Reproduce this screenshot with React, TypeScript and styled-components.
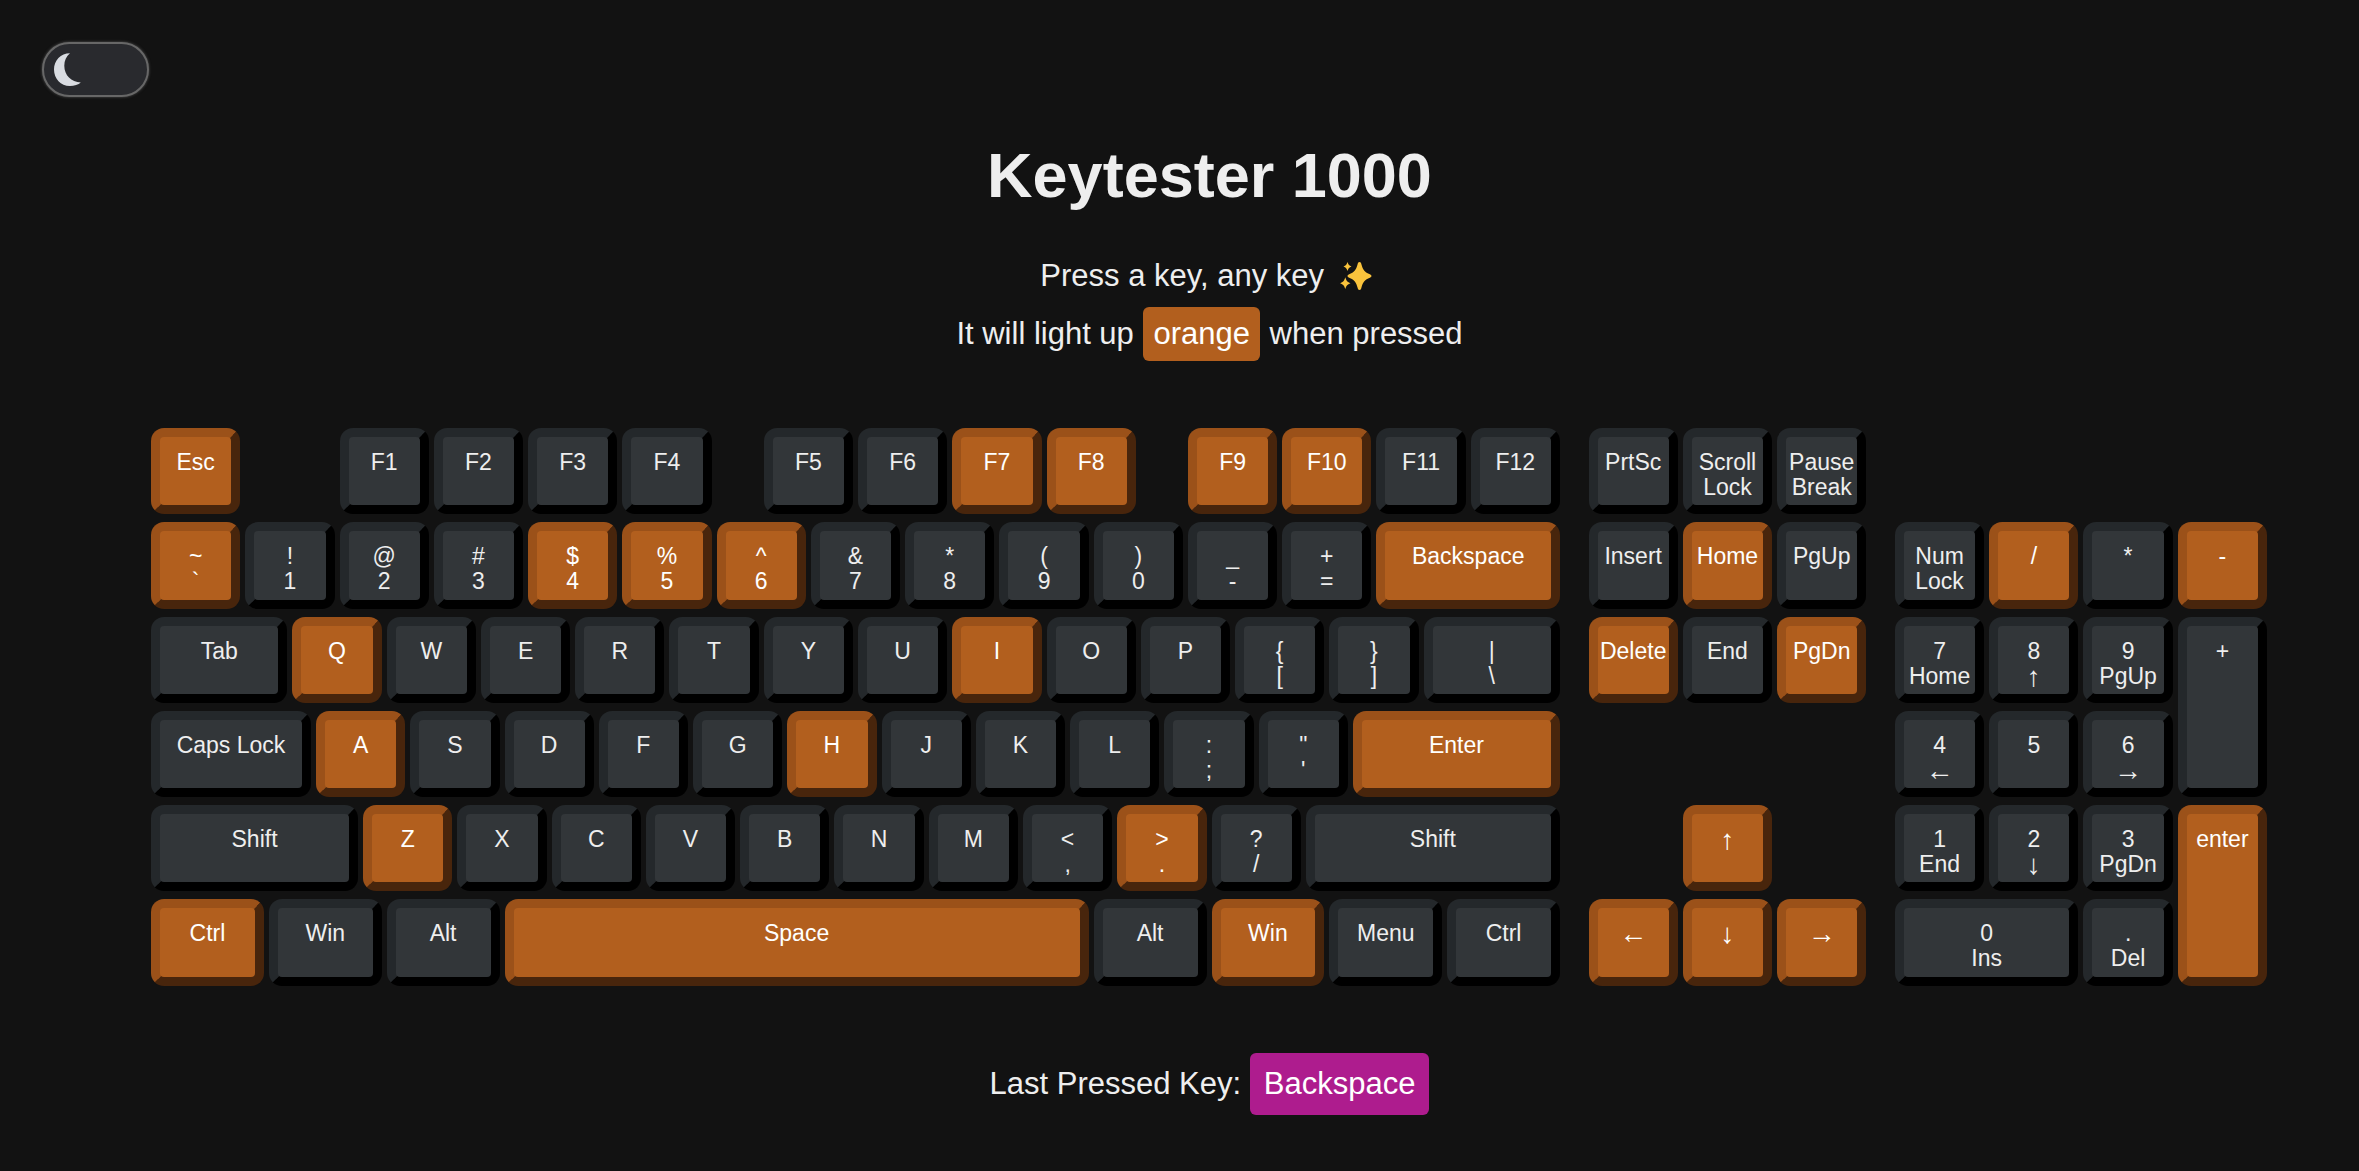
import React, { useState } from 'react';
import styled, { createGlobalStyle } from 'styled-components';

const GlobalStyle = createGlobalStyle`
  * { box-sizing: border-box; }
  body {
    margin: 0;
    background: #121212;
    color: #eee;
    font-family: "Liberation Sans", Arial, sans-serif;
  }
`;

const Page = styled.div`
  min-height: 100vh;
`;

const Header = styled.header`
  display: flex;
  padding: 42px 42px 0;
`;

const ThemeToggle = styled.button`
  display: flex;
  align-items: center;
  width: 107px;
  height: 55px;
  padding: 0 10px;
  border: 2px solid #676767;
  border-radius: 28px;
  background: #292a2e;
  box-shadow: 0 0 3px #555;
  cursor: pointer;
`;

const Main = styled.main`
  display: flex;
  flex-direction: column;
  align-items: center;
  padding: 42px 0 40px 60px;
`;

const Title = styled.h1`
  margin: 0 0 36px;
  font-size: 63px;
  line-height: 72px;
`;

const Line = styled.p<{ $height: number }>`
  display: flex;
  align-items: center;
  margin: 0;
  font-size: 31px;
  line-height: ${(p) => p.$height}px;
  white-space: pre;
`;

const Highlight = styled.span<{ $tone: 'orange' | 'purple' }>`
  display: inline-block;
  border-radius: 6px;
  color: #fff;
  ${(p) =>
    p.$tone === 'orange'
      ? 'margin: 0 1px; padding: 0 10px; line-height: 54px; background: #b25f1e;'
      : 'padding: 0 14px; line-height: 62px; background: #ae1c8e;'}
`;

const Keyboard = styled.div`
  display: grid;
  grid-template-columns: repeat(90, minmax(0, 1fr));
  grid-template-rows: repeat(6, minmax(0, 1fr));
  aspect-ratio: 90 / 24;
  align-self: stretch;
  margin: 65px 89px 59px;
`;

const KeyCap = styled.button<{
  $row: number;
  $col: number;
  $width: number;
  $height: number;
  $lit: boolean;
}>`
  grid-row: ${(p) => p.$row} / span ${(p) => p.$height};
  grid-column: ${(p) => p.$col} / span ${(p) => p.$width};
  display: flex;
  flex-direction: column;
  align-items: center;
  justify-content: flex-start;
  margin: 0 3px 8px 2px;
  padding: 13px 0 0;
  border: 9px solid;
  border-color: ${(p) =>
    p.$lit ? '#9b5119 #48250c #48250c #9b5119' : '#24282b #000 #000 #24282b'};
  border-radius: 13px;
  background: ${(p) => (p.$lit ? '#b25f1e' : '#323639')};
  color: ${(p) => (p.$lit ? '#fff' : '#eee')};
  font: 23px/25px "Liberation Sans", Arial, sans-serif;
  white-space: nowrap;
  cursor: pointer;
`;

const Legend = styled.span<{ $arrow: boolean }>`
  font-size: ${(p) => (p.$arrow ? 28 : 23)}px;
`;

const MoonIcon = () => (
  <svg width="27" height="33" viewBox="0 0 27 33" aria-hidden="true">
    <path d="M16 0.3C6.600 0.300 0 7.600 0 16.500C0 25.600 6.800 33 15.800 33C20.300 33 24.500 31.500 26.800 29.500C17.300 29.300 10.300 22.300 10.300 12.800C10.300 7.800 12.300 3.200 16 0.300Z" fill="#d9dce1" />
  </svg>
);

const SparklesIcon = () => (
  <svg width="46" height="32" viewBox="-2 0 46 32" role="img" aria-label="sparkles">
    <g fill="#fac33c">
      <path d="M24.500 2C25.600 2 26 2.800 26.400 4.200C28 10 29.500 12 34.300 14C35.800 14.600 36.500 15.100 36.500 16C36.500 16.900 35.800 17.400 34.300 18C29.500 20 28 22 26.400 27.800C26 29.200 25.600 30 24.500 30C23.400 30 23 29.200 22.600 27.800C21 22 19.500 20 14.700 18C13.200 17.400 12.500 16.900 12.500 16C12.500 15.100 13.200 14.600 14.700 14C19.500 12 21 10 22.600 4.200C23 2.800 23.400 2 24.500 2Z" />
      <path d="M12.500 2C13.400 4.800 14.200 5.600 16.500 6.500C14.200 7.400 13.400 8.200 12.500 11C11.600 8.200 10.800 7.400 8.500 6.500C10.800 5.600 11.600 4.800 12.500 2Z" />
      <path d="M10.300 17.300C11.400 20.900 12.400 22.100 15.500 23.200C12.400 24.300 11.400 25.500 10.300 29.100C9.200 25.500 8.200 24.300 5.100 23.200C8.200 22.100 9.200 20.900 10.300 17.300Z" />
    </g>
  </svg>
);

type KeyDef = { id: string; lines: string[]; row: number; col: number; width: number; height: number };

/* Each row lists keys as [legend, width in key units, height in rows]; a number leaves that much space. */
type Entry = number | string | [string, number, number?];

const ROWS: Entry[][] = [
  ['Esc', 1, 'F1', 'F2', 'F3', 'F4', 0.5, 'F5', 'F6', 'F7', 'F8', 0.5, 'F9', 'F10', 'F11', 'F12', 0.25,
    'PrtSc', 'Scroll|Lock', 'Pause|Break'],
  ['~|`', '!|1', '@|2', '#|3', '$|4', '%|5', '^|6', '&|7', '*|8', '(|9', ')|0', '_|-', '+|=', ['Backspace', 2], 0.25,
    'Insert', 'Home', 'PgUp', 0.25, 'Num|Lock', '/', '*', '-'],
  [['Tab', 1.5], 'Q', 'W', 'E', 'R', 'T', 'Y', 'U', 'I', 'O', 'P', '{|[', '}|]', ['bar', 1.5], 0.25,
    'Delete', 'End', 'PgDn', 0.25, '7|Home', '8|↑', '9|PgUp', ['+', 1, 2]],
  [['Caps Lock', 1.75], 'A', 'S', 'D', 'F', 'G', 'H', 'J', 'K', 'L', ':|;', "\"|'", ['Enter', 2.25], 3.5,
    '4|←', '5', '6|→'],
  [['Shift', 2.25], 'Z', 'X', 'C', 'V', 'B', 'N', 'M', '<|,', '>|.', '?|/', ['Shift', 2.75], 1.25,
    '↑', 1.25, '1|End', '2|↓', '3|PgDn', ['enter', 1, 2]],
  [['Ctrl', 1.25], ['Win', 1.25], ['Alt', 1.25], ['Space', 6.25], ['Alt', 1.25], ['Win', 1.25], ['Menu', 1.25],
    ['Ctrl', 1.25], 0.25, '←', '↓', '→', 0.25, ['0|Ins', 2], '.|Del'],
];

const KEYS: KeyDef[] = ROWS.flatMap((entries, rowIndex) => {
  let col = 1;
  const keys: KeyDef[] = [];
  entries.forEach((entry) => {
    if (typeof entry === 'number') {
      col += entry * 4;
      return;
    }
    const [legend, units, height = 1] = typeof entry === 'string' ? ([entry, 1, 1] as [string, number, number]) : entry;
    const lines = legend === 'bar' ? ['|', '\\'] : legend.split('|');
    keys.push({ id: `${rowIndex + 1}:${col}`, lines, row: rowIndex + 1, col, width: units * 4, height });
    col += units * 4;
  });
  return keys;
});

const INITIALLY_LIT = [
  '1:1', '1:35', '1:39', '1:45', '1:49',
  '2:1', '2:17', '2:21', '2:25', '2:53', '2:66', '2:79', '2:87',
  '3:7', '3:35', '3:62', '3:70',
  '4:8', '4:28', '4:52',
  '5:10', '5:42', '5:66', '5:87',
  '6:1', '6:16', '6:46', '6:62', '6:66', '6:70',
];

export default function App() {
  const [lit, setLit] = useState<string[]>(INITIALLY_LIT);
  const [lastKey, setLastKey] = useState('Backspace');

  const press = (key: KeyDef) => {
    setLit((current) => (current.includes(key.id) ? current : [...current, key.id]));
    setLastKey(key.lines[key.lines.length - 1]);
  };

  return (
    <Page>
      <GlobalStyle />
      <Header>
        <ThemeToggle type="button" role="switch" aria-checked="true" aria-label="Dark mode">
          <MoonIcon />
        </ThemeToggle>
      </Header>
      <Main>
        <Title>Keytester 1000</Title>
        <Line $height={58}>
          {'Press a key, any key '}
          <SparklesIcon />
        </Line>
        <Line $height={58}>
          {'It will light up '}
          <Highlight $tone="orange">orange</Highlight>
          {' when pressed'}
        </Line>
        <Keyboard>
          {KEYS.map((key) => (
            <KeyCap
              key={key.id}
              type="button"
              $row={key.row}
              $col={key.col}
              $width={key.width}
              $height={key.height}
              $lit={lit.includes(key.id)}
              onClick={() => press(key)}
            >
              {key.lines.map((line) => (
                <Legend key={line} $arrow={'←↑→↓'.includes(line)}>
                  {line}
                </Legend>
              ))}
            </KeyCap>
          ))}
        </Keyboard>
        <Line $height={62}>
          {'Last Pressed Key: '}
          <Highlight $tone="purple">{lastKey}</Highlight>
        </Line>
      </Main>
    </Page>
  );
}
